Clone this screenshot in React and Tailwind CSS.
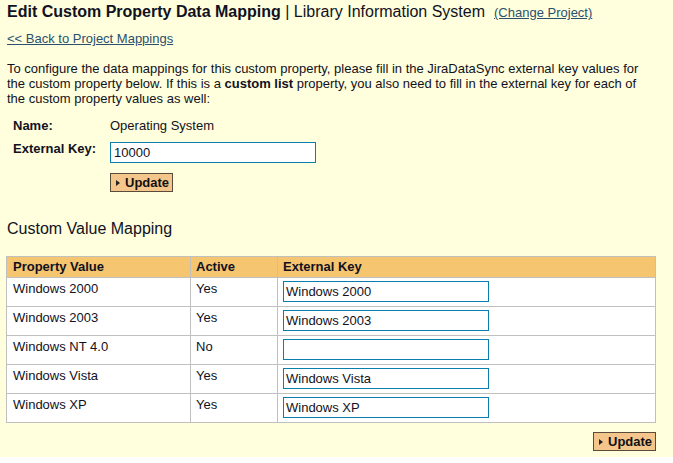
import React from "react";

const rows = [
  { name: "Windows 2000", active: "Yes", key: "Windows 2000" },
  { name: "Windows 2003", active: "Yes", key: "Windows 2003" },
  { name: "Windows NT 4.0", active: "No", key: "" },
  { name: "Windows Vista", active: "Yes", key: "Windows Vista" },
  { name: "Windows XP", active: "Yes", key: "Windows XP" },
];

function UpdateButton() {
  return (
    <button className="flex items-center h-[19px] w-[63px] pl-[5px] gap-[5px] border border-[#5a4b3a] bg-[#f5c68c] text-[13px] font-bold text-[#111] leading-none">
      <svg width="4" height="6" viewBox="0 0 4 6">
        <path d="M0 0 L4 3 L0 6 Z" fill="#222" />
      </svg>
      Update
    </button>
  );
}

function App() {
  return (
    <div
      className="h-[457px] w-full bg-[#ffffdd] text-[13px] text-[#111122] pl-[7px] pt-[2px]"
      style={{ fontFamily: '"Liberation Sans", Arial, sans-serif' }}
    >
      <div className="flex items-baseline leading-[20px]">
        <span className="text-[16px] font-bold">Edit Custom Property Data Mapping</span>
        <span className="text-[16px]">&nbsp;| Library Information System</span>
        <a href="#" className="ml-[9px] text-[#2b4f6e] underline">(Change Project)</a>
      </div>

      <a href="#" className="block mt-[8px] leading-[16px] text-[#2b4f6e] underline w-fit">
        &lt;&lt; Back to Project Mappings
      </a>

      <p className="mt-[14px] leading-[15px] whitespace-nowrap">
        To configure the data mappings for this custom property, please fill in the JiraDataSync external key values for
        <br />
        the custom property below. If this is a <b>custom list</b> property, you also need to fill in the external key for each of
        <br />
        the custom property values as well:
      </p>

      <div className="pl-[6px] mt-[12px]">
        <div className="grid grid-cols-[97px_auto] leading-[16px]">
          <span className="font-bold">Name:</span>
          <span>Operating System</span>
        </div>
        <div className="grid grid-cols-[97px_auto] mt-[6px]">
          <span className="font-bold leading-[16px] pt-[1px]">External Key:</span>
          <div>
            <input
              defaultValue="10000"
              className="mt-[2px] h-[21px] w-[206px] border border-[#0a7fae] bg-white px-[3px] text-[13px] outline-none"
            />
            <div className="mt-[10px]">
              <UpdateButton />
            </div>
          </div>
        </div>
      </div>

      <div className="mt-[27px] text-[16px] leading-[20px]">Custom Value Mapping</div>

      <table className="mt-[17px] ml-[-1px] w-[650px] border-collapse border border-[#c0c0c0] bg-white leading-[16px]">
        <thead>
          <tr className="bg-[#f5c56f] h-[21px]">
            <th className="border border-[#c0c0c0] w-[184px] text-left font-bold px-[6px] py-0">Property Value</th>
            <th className="border border-[#c0c0c0] w-[87px] text-left font-bold px-[5px] py-0">Active</th>
            <th className="border border-[#c0c0c0] text-left font-bold px-[5px] py-0">External Key</th>
          </tr>
        </thead>
        <tbody>
          {rows.map((r) => (
            <tr key={r.name} className="h-[29px]">
              <td className="border border-[#c0c0c0] align-top px-[6px] pt-[3px]">{r.name}</td>
              <td className="border border-[#c0c0c0] align-top px-[5px] pt-[3px]">{r.active}</td>
              <td className="border border-[#c0c0c0] align-top px-[5px] pt-[3px]">
                <input
                  defaultValue={r.key}
                  className="block h-[21px] w-[206px] border border-[#0a7fae] bg-white px-[2px] text-[13px] outline-none"
                />
              </td>
            </tr>
          ))}
        </tbody>
      </table>

      <div className="flex justify-end w-[649px] mt-[9px]">
        <UpdateButton />
      </div>
    </div>
  );
}

export default App;
